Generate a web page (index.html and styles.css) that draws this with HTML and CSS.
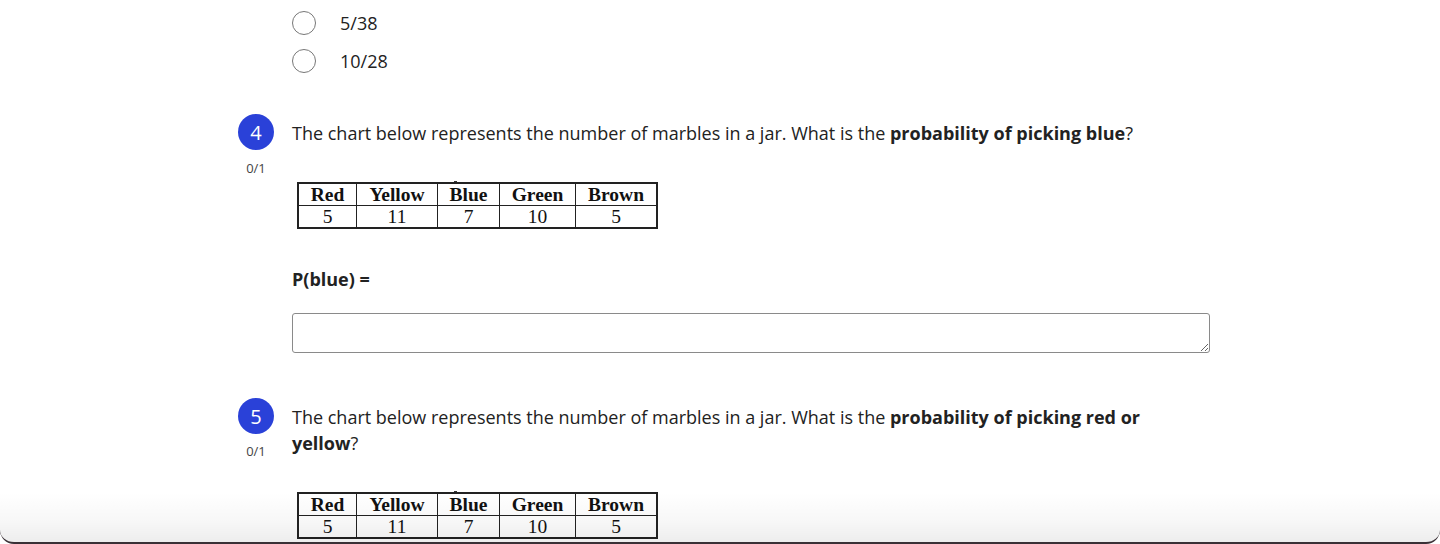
FILE: index.html
```html
<!DOCTYPE html>
<html lang="en">
<head>
<meta charset="utf-8">
<title>Quiz</title>
<link rel="stylesheet" href="styles.css">
</head>
<body>
<div class="page">
  <div class="options">
    <label class="option"><span class="radio"></span><span class="opt-text">5/38</span></label>
    <label class="option"><span class="radio"></span><span class="opt-text">10/28</span></label>
  </div>

  <div class="question q4">
    <div class="side">
      <div class="badge">4</div>
      <div class="score">0/1</div>
    </div>
    <div class="body">
      <p class="prompt">The chart below represents the number of marbles in a jar. What is the <b>probability of picking blue</b>?</p>
      <table class="chart">
        <tr><th>Red</th><th>Yellow</th><th><span class="tick">Blue</span></th><th>Green</th><th>Brown</th></tr>
        <tr><td>5</td><td>11</td><td>7</td><td>10</td><td>5</td></tr>
      </table>
      <p class="label">P(blue) =</p>
      <textarea class="answer"></textarea>
    </div>
  </div>

  <div class="question q5">
    <div class="side">
      <div class="badge">5</div>
      <div class="score">0/1</div>
    </div>
    <div class="body">
      <p class="prompt">The chart below represents the number of marbles in a jar. What is the <b>probability of picking red or yellow</b>?</p>
      <table class="chart">
        <tr><th>Red</th><th>Yellow</th><th><span class="tick">Blue</span></th><th>Green</th><th>Brown</th></tr>
        <tr><td>5</td><td>11</td><td>7</td><td>10</td><td>5</td></tr>
      </table>
    </div>
  </div>
</div>
<div class="frame"></div>
</body>
</html>
```
FILE: styles.css
```css
html, body {
  margin: 0;
  padding: 0;
  background: #fff;
  height: 544px;
  overflow: hidden;
}
body {
  font-family: "Open Sans", "Liberation Sans", sans-serif;
  color: #222;
  position: relative;
}
.page {
  padding-left: 238px;
  padding-top: 11px;
}
.options {
  padding-left: 54px;
  display: flex;
  flex-direction: column;
  gap: 14px;
}
.option {
  display: flex;
  align-items: center;
  height: 24px;
}
.radio {
  border: 1px solid #777;
  border-radius: 50%;
  box-sizing: border-box;
  width: 24px;
  height: 24px;
}
.opt-text {
  margin-left: 24px;
  font-size: 18px;
  color: #222;
}
.question {
  display: flex;
}
.q4 { margin-top: 41px; }
.q5 { margin-top: 45px; }
.side {
  width: 54px;
  display: flex;
  flex-direction: column;
  align-items: flex-start;
}
.badge {
  width: 36px;
  height: 36px;
  border-radius: 50%;
  background: #2a41d8;
  color: #fff;
  font-size: 20px;
  display: flex;
  align-items: center;
  justify-content: center;
}
.score {
  width: 36px;
  text-align: center;
  font-size: 13px;
  color: #444;
  margin-top: 9px;
}
.q5 .score { margin-top: 8px; }
.body {
  width: 920px;
}
.prompt {
  margin: 0;
  padding-top: 6px;
  max-width: 880px;
  font-size: 18px;
  line-height: 26px;
  color: #222;
}
.prompt b { font-weight: 700; }
.chart {
  border-collapse: collapse;
  margin-left: 5px;
  margin-top: 36px;
  font-family: "Liberation Serif", "Times New Roman", serif;
  font-size: 19.5px;
  color: #111;
  border: 2px solid #222;
}
.chart th, .chart td {
  border: 1.5px solid #222;
  text-align: center;
  padding: 0;
  height: 21px;
  line-height: 20px;
}
.chart th { font-weight: 700; }
.chart th:nth-child(1) { width: 57px; }
.chart th:nth-child(2) { width: 80px; }
.chart th:nth-child(3) { width: 61px; }
.chart th:nth-child(4) { width: 75px; }
.chart th:nth-child(5) { width: 80px; }
.tick { position: relative; }
.tick::before {
  content: "";
  position: absolute;
  left: 4px;
  top: -3px;
  width: 3px;
  height: 1px;
  background: #333;
}
.label {
  margin: 38px 0 0;
  font-size: 18px;
  font-weight: 700;
  color: #222;
}
.answer {
  display: block;
  margin-top: 22px;
  width: 918px;
  height: 40px;
  box-sizing: border-box;
  border: 1px solid #8a8a8a;
  border-radius: 3px;
  resize: vertical;
  font-family: inherit;
}
.frame {
  position: absolute;
  left: 0;
  right: 0;
  bottom: 0;
  height: 50px;
  pointer-events: none;
  border-bottom: 2px solid #3a3036;
  border-radius: 0 0 14px 14px;
  background: linear-gradient(to bottom, rgba(0,0,0,0) 0%, rgba(0,0,0,0.03) 60%, rgba(0,0,0,0.07) 100%);
}
```
